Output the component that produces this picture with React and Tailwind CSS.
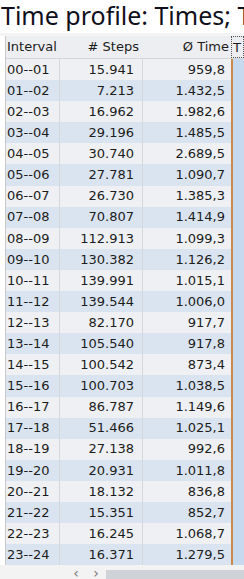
const rows = [
  ['00--01', '15.941', '959,8'],
  ['01--02', '7.213', '1.432,5'],
  ['02--03', '16.962', '1.982,6'],
  ['03--04', '29.196', '1.485,5'],
  ['04--05', '30.740', '2.689,5'],
  ['05--06', '27.781', '1.090,7'],
  ['06--07', '26.730', '1.385,3'],
  ['07--08', '70.807', '1.414,9'],
  ['08--09', '112.913', '1.099,3'],
  ['09--10', '130.382', '1.126,2'],
  ['10--11', '139.991', '1.015,1'],
  ['11--12', '139.544', '1.006,0'],
  ['12--13', '82.170', '917,7'],
  ['13--14', '105.540', '917,8'],
  ['14--15', '100.542', '873,4'],
  ['15--16', '100.703', '1.038,5'],
  ['16--17', '86.787', '1.149,6'],
  ['17--18', '51.466', '1.025,1'],
  ['18--19', '27.138', '992,6'],
  ['19--20', '20.931', '1.011,8'],
  ['20--21', '18.132', '836,8'],
  ['21--22', '15.351', '852,7'],
  ['22--23', '16.245', '1.068,7'],
  ['23--24', '16.371', '1.279,5'],
];

export default function App() {
  return (
    <div className="w-[244px] h-[579px] overflow-hidden bg-white text-[#1c1c1c] font-['DejaVu_Sans',sans-serif]">
      <div className="h-[33px] pl-[1px] whitespace-nowrap overflow-hidden text-[25px] leading-[30px] text-[#10101c] font-['Noto_Sans',sans-serif]">
        Time profile: Times; Time
      </div>
      <div className="h-[3px] bg-[#f4f4f4]" />

      <div className="flex">
        <div className="w-[6px] shrink-0 bg-white border-r border-[#c8c8c8]" />
        <div className="flex-1 text-[13px]">
          <div className="flex h-[23px] items-center bg-[#eceef1] border-b border-[#d6d6d6]">
            <div className="w-[54px] pl-[1px] shrink-0 whitespace-nowrap">Interval</div>
            <div className="w-[83px] pr-[4px] text-right shrink-0 whitespace-nowrap">#&nbsp;Steps</div>
            <div className="w-[88px] pr-[2px] text-right shrink-0 whitespace-nowrap">Ø Time</div>
            <div className="flex-1 h-full border border-dotted border-[#555] pl-[1px] leading-[21px] overflow-hidden">T</div>
          </div>
          {rows.map((r, i) => (
            <div
              key={r[0]}
              className={`flex h-[21.1px] items-center ${i % 2 === 0 ? 'bg-[#eef0f3]' : 'bg-[#dae4f0]'}`}
            >
              <div className="w-[54px] h-full pl-[1px] shrink-0 border-r border-[#d4d8dd] flex items-center">{r[0]}</div>
              <div className="w-[83px] h-full pr-[8px] shrink-0 border-r border-[#d4d8dd] flex items-center justify-end">{r[1]}</div>
              <div className="w-[88px] h-full pr-[6px] shrink-0 flex items-center justify-end">{r[2]}</div>
              <div className="flex-1 h-full border-l-2 border-[#c98a4b] bg-[#c7d9ee]" />
            </div>
          ))}
        </div>
      </div>

      <div className="flex h-[14px] bg-[#f3f3f3] items-end">
        <div className="w-[66px]" />
        <div className="w-[40px] flex justify-around text-[14px] leading-[12px] text-[#777]">
          <span>‹</span>
          <span>›</span>
        </div>
        <div className="flex-1 h-[9px] bg-[#cfd3d8]" />
      </div>
    </div>
  );
}
